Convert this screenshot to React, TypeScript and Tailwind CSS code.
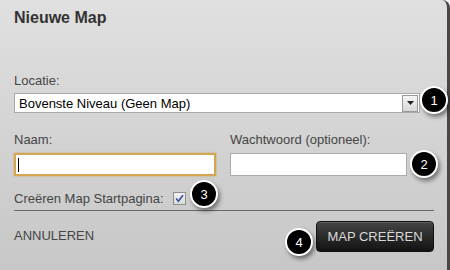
// Nieuwe Map dialog
import React from "react";

function Badge({ n, className }: { n: number; className: string }) {
  return (
    <div
      className={`absolute w-[28px] h-[28px] rounded-full bg-black border-2 border-white shadow-[2px_3px_4px_rgba(0,0,0,0.45)] flex items-center justify-center text-white text-[13px] leading-none ${className}`}
    >
      {n}
    </div>
  );
}

export default function App() {
  return (
    <div className="w-[450px] h-[270px] bg-[#efefef] overflow-hidden font-['Liberation_Sans',Arial,sans-serif]">
      <div className="relative w-[450px] h-[270px] rounded-tr-[8px] border-r-[3px] border-r-[#4a4444] bg-gradient-to-b from-[#e0e0e0] to-[#c7c7c7] pl-[14px] pr-[13px] pt-[9px] text-[13px] text-[#454545]">
        <h1 className="text-[16px] leading-[18px] font-bold text-[#333]">Nieuwe Map</h1>

        <div className="mt-[45.5px] leading-[15px]">Locatie:</div>
        <div className="mt-[5.5px] w-[406px] h-[20px] bg-white border border-[#a9a9a9] flex items-center justify-between">
          <span className="pl-[4px] text-black leading-[15px]">Bovenste Niveau (Geen Map)</span>
          <span className="w-[16px] h-[17px] mr-[1px] border border-[#9a9a9a] bg-gradient-to-b from-[#f4f4f4] to-[#d8d8d8] flex items-center justify-center">
            <svg width="7" height="4" viewBox="0 0 7 4">
              <path d="M0 0h7L3.5 4z" fill="#222" />
            </svg>
          </span>
        </div>

        <div className="mt-[19px] flex gap-[14px]">
          <div className="w-[202px]">
            <div className="leading-[15px]">Naam:</div>
            <div className="mt-[6px] h-[23px] bg-white border-2 border-[#d6a551] shadow-[0_0_2px_rgba(200,140,40,0.6)] flex items-center pl-[2px]">
              <span className="w-[1px] h-[14px] bg-black" />
            </div>
          </div>
          <div className="w-[177px]">
            <div className="leading-[15px]">Wachtwoord (optioneel):</div>
            <div className="mt-[6px] h-[23px] bg-white border border-[#aaa]" />
          </div>
        </div>

        <div className="mt-[14px] flex items-center h-[16px]">
          <span className="leading-[15px]">Creëren Map Startpagina:</span>
          <span className="ml-[9px] w-[13px] h-[13px] border border-[#8e8f8f] bg-gradient-to-b from-[#f0f0f0] to-[#dcdcdc] flex items-center justify-center">
            <svg width="9" height="9" viewBox="0 0 9 9">
              <path d="M1.2 4.6l2.2 2.6L8 1.2" fill="none" stroke="#3a4e9a" strokeWidth="1.6" />
            </svg>
          </span>
        </div>

        <div className="mt-[4px] w-[420px] h-px bg-[#6a6a6a]" />

        <div className="mt-[10px] flex items-center justify-between w-[420px]">
          <span className="leading-[15px] mt-[-2px]">ANNULEREN</span>
          <button className="w-[118px] h-[31px] rounded-[4px] border border-[#111] bg-gradient-to-b from-[#454545] to-[#131313] text-[#d9d9d9] text-[13px] leading-none shadow-[inset_0_1px_0_rgba(255,255,255,0.15)]">
            MAP CREËREN
          </button>
        </div>

        <Badge n={1} className="left-[420px] top-[86px]" />
        <Badge n={2} className="left-[410px] top-[150px]" />
        <Badge n={3} className="left-[190px] top-[180px]" />
        <Badge n={4} className="left-[285px] top-[228px]" />
      </div>
    </div>
  );
}
